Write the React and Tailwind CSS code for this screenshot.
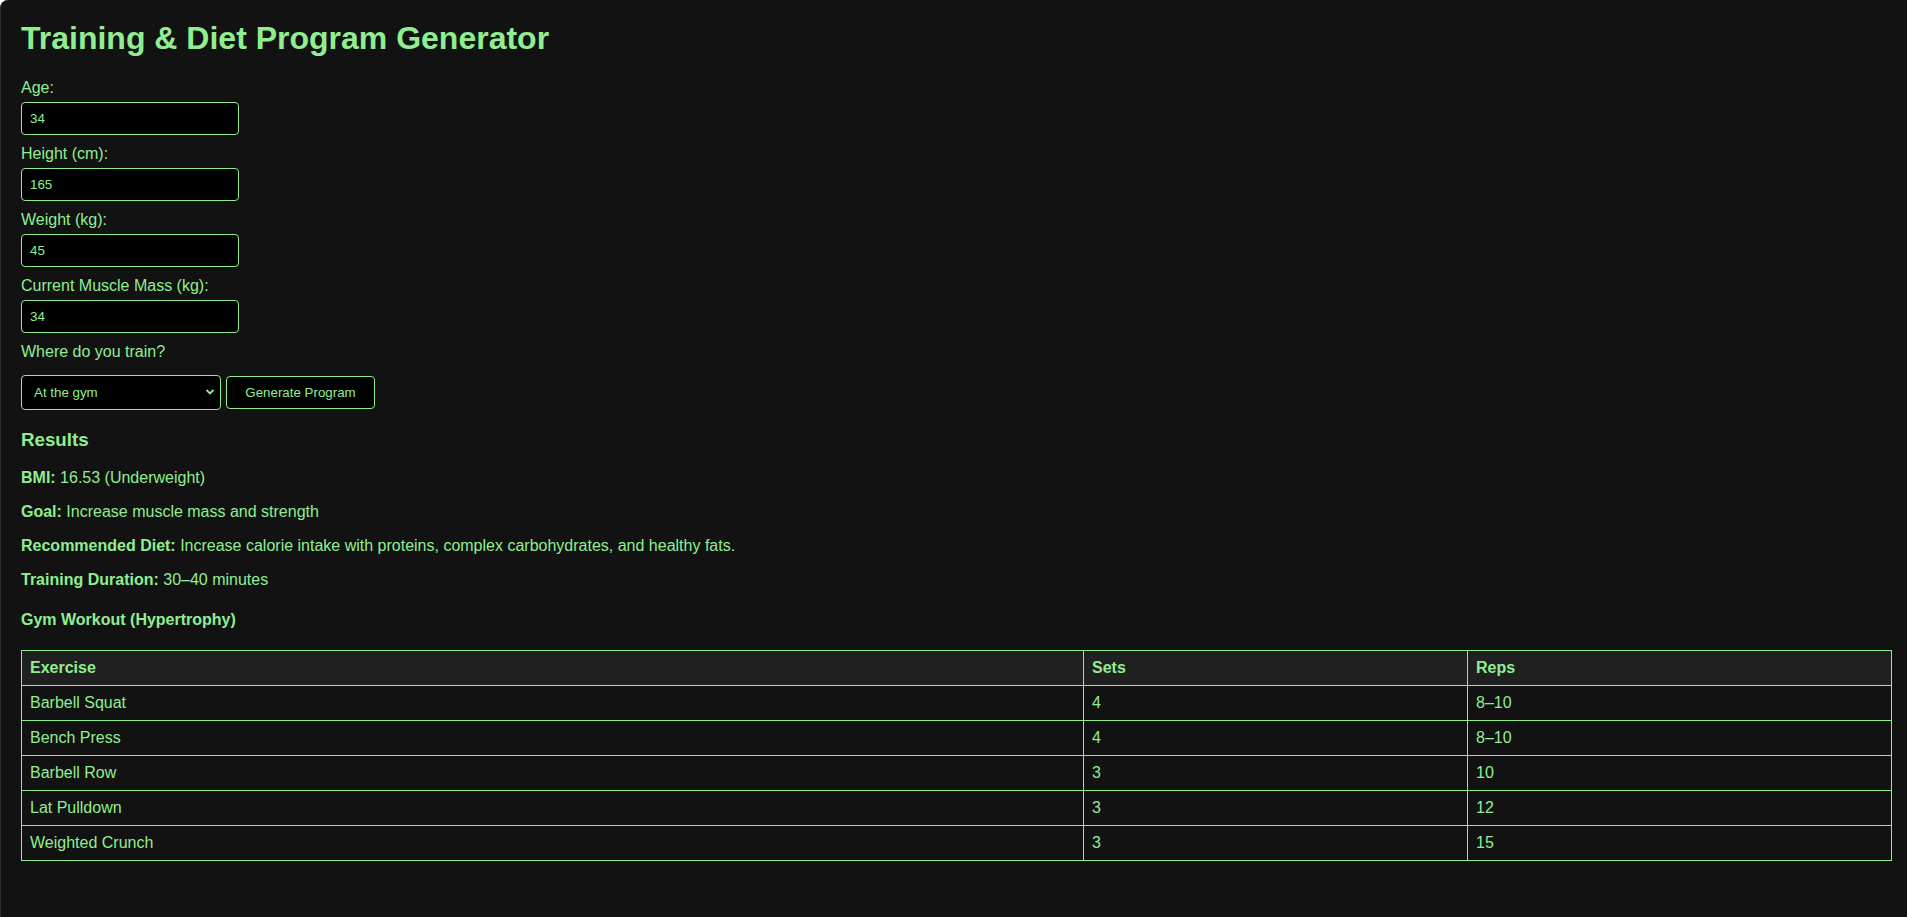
import React from "react";

const rows = [
  ["Barbell Squat", "4", "8–10"],
  ["Bench Press", "4", "8–10"],
  ["Barbell Row", "3", "10"],
  ["Lat Pulldown", "3", "12"],
  ["Weighted Crunch", "3", "15"],
];

function Field({ label, value }) {
  return (
    <>
      <label className="block text-[16px] leading-[18px]">{label}</label>
      <input
        type="text"
        defaultValue={value}
        className="block w-[218px] h-[33px] mt-[5px] mb-[10px] px-[8px] bg-black border border-[#90ee90] rounded-[4px] text-[13.33px] text-[#90ee90] outline-none font-['Liberation_Sans',Arial,sans-serif]"
      />
    </>
  );
}

export default function App() {
  return (
    <div className="min-h-screen bg-[#121212] text-[#90ee90] font-['Liberation_Sans',Arial,sans-serif] border-l border-[#2c2c2c] rounded-tl-[8px] pl-[20px] pr-[15px] pt-[20px] pb-[40px]">
      <h1 className="text-[32px] font-bold leading-[37px] mb-[22px]">
        Training &amp; Diet Program Generator
      </h1>

      <Field label="Age:" value="34" />
      <Field label="Height (cm):" value="165" />
      <Field label="Weight (kg):" value="45" />
      <Field label="Current Muscle Mass (kg):" value="34" />

      <label className="block text-[16px] leading-[18px]">Where do you train?</label>
      <div className="flex items-center gap-[5px] mt-[14px]">
        <div className="relative">
          <select
            defaultValue="gym"
            className="appearance-none block w-[200px] h-[35px] pl-[12px] pr-[24px] bg-black border border-[#90ee90] rounded-[4px] text-[13.33px] text-[#90ee90] outline-none font-['Liberation_Sans',Arial,sans-serif]"
          >
            <option value="gym">At the gym</option>
            <option value="home">At home</option>
          </select>
          <svg
            className="absolute right-[6px] top-[13px] pointer-events-none"
            width="10"
            height="8"
            viewBox="0 0 10 8"
            fill="none"
          >
            <polyline points="1.5,2 5,5.5 8.5,2" stroke="#90ee90" strokeWidth="1.8" />
          </svg>
        </div>
        <button className="w-[149px] h-[33px] bg-black border border-[#90ee90] rounded-[4px] text-[13.33px] text-[#90ee90] font-['Liberation_Sans',Arial,sans-serif]">
          Generate Program
        </button>
      </div>

      <h3 className="text-[18.72px] font-bold leading-[21px] mt-[19px]">Results</h3>
      <p className="text-[16px] leading-[18px] mt-[18.5px]">
        <strong>BMI:</strong> 16.53 (Underweight)
      </p>
      <p className="text-[16px] leading-[18px] mt-[16px]">
        <strong>Goal:</strong> Increase muscle mass and strength
      </p>
      <p className="text-[16px] leading-[18px] mt-[16px]">
        <strong>Recommended Diet:</strong> Increase calorie intake with proteins, complex carbohydrates, and healthy fats.
      </p>
      <p className="text-[16px] leading-[18px] mt-[16px]">
        <strong>Training Duration:</strong> 30–40 minutes
      </p>

      <h4 className="text-[16px] font-bold leading-[18px] mt-[22px] mb-[21px]">
        Gym Workout (Hypertrophy)
      </h4>

      <table className="w-full border-collapse text-[16px]">
        <colgroup>
          <col className="w-[1062px]" />
          <col className="w-[384px]" />
          <col />
        </colgroup>
        <thead>
          <tr className="bg-[#202020]">
            <th className="border border-[#90ee90] px-[8px] py-[8px] leading-[18px] text-left font-bold">Exercise</th>
            <th className="border border-[#90ee90] px-[8px] py-[8px] leading-[18px] text-left font-bold">Sets</th>
            <th className="border border-[#90ee90] px-[8px] py-[8px] leading-[18px] text-left font-bold">Reps</th>
          </tr>
        </thead>
        <tbody>
          {rows.map((r) => (
            <tr key={r[0]}>
              {r.map((c, i) => (
                <td key={i} className="border border-[#90ee90] px-[8px] py-[8px] leading-[18px] text-left">
                  {c}
                </td>
              ))}
            </tr>
          ))}
        </tbody>
      </table>
    </div>
  );
}
